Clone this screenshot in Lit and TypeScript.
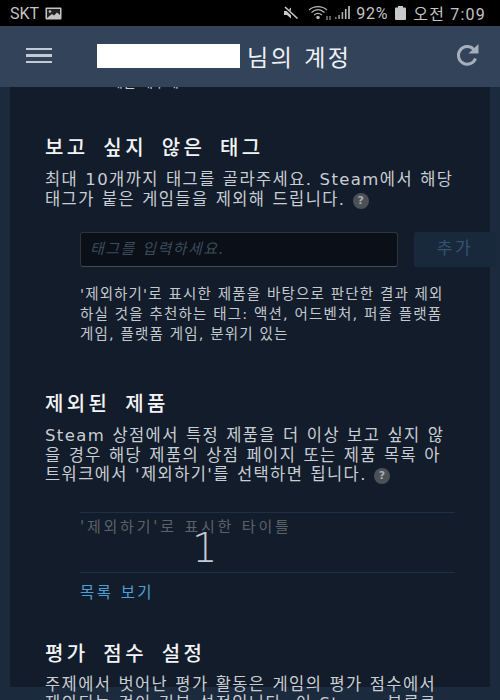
import { css, html, LitElement } from "lit";
import { customElement } from "lit/decorators.js";

@customElement("app-root")
export class AppRoot extends LitElement {
    renderHelp() {
        return html`<span class="help">?</span>`;
    }

    renderStatusBar() {
        return html`
        <div class="status">
            <div class="status-left">
                <span>SKT</span>
                <svg width="17" height="13" viewBox="0 0 17 13">
                    <rect x="0.5" y="0.5" width="16" height="12" rx="1" fill="#c4c4c4" />
                    <rect x="2" y="2" width="13" height="9" fill="#222" />
                    <circle cx="5" cy="4.5" r="1.3" fill="#c4c4c4" />
                    <path d="M2 11 L7 7 L9 8.5 L12 5.5 L15 8 V11 Z" fill="#c4c4c4" />
                </svg>
            </div>
            <div class="status-right">
                <svg width="16" height="14" viewBox="0 0 16 14">
                    <path d="M1 5 H4 L8 1.5 V12.5 L4 9 H1 Z" fill="#c8c8c8" />
                    <path d="M1.5 1 L14 13" stroke="#000" stroke-width="3" />
                    <path d="M2 1 L14.5 12.5" stroke="#c8c8c8" stroke-width="1.6" />
                </svg>
                <svg class="wifi" width="24" height="16" viewBox="0 0 24 16" fill="none" stroke="#b8b8b8" stroke-width="1.1">
                    <path d="M1 5 C6 0.5 14 0.5 19 5" />
                    <path d="M3.5 7.5 C7.5 4 12.5 4 16.5 7.5" />
                    <path d="M6 10 C8.5 8 11.5 8 14 10" />
                    <circle cx="10" cy="12.5" r="1.2" fill="#b8b8b8" />
                    <path d="M19 15 V11 M22 15 V11" stroke-width="1" />
                </svg>
                <svg width="15" height="14" viewBox="0 0 15 14">
                    <rect x="0" y="11" width="1.6" height="2" fill="#777" />
                    <rect x="3.3" y="9" width="1.6" height="4" fill="#999" />
                    <rect x="6.6" y="6" width="1.6" height="7" fill="#aaa" />
                    <rect x="9.9" y="3" width="1.6" height="10" fill="#bbb" />
                    <rect x="13.2" y="0" width="1.6" height="13" fill="#c8c8c8" />
                </svg>
                <span class="pct">92%</span>
                <svg class="battery" width="11" height="14" viewBox="0 0 11 14">
                    <rect x="3" y="0" width="5" height="2" fill="#c8c8c8" />
                    <rect x="0" y="1.5" width="11" height="12.5" rx="1" fill="#c8c8c8" />
                </svg>
                <span class="time">오전 7:09</span>
            </div>
        </div>`;
    }

    renderHeader() {
        return html`
        <header>
            <div class="burger"><i></i><i></i><i></i></div>
            <div class="name"></div>
            <div class="title">님의 계정</div>
            <svg class="refresh" width="25" height="25" viewBox="0 0 25 25" fill="none">
                <path d="M20.5 15.5 A8.8 8.8 0 1 1 18.6 6.3" stroke="#a6b0bc" stroke-width="3" />
                <path d="M13.5 10.5 L23.5 10.5 L23.5 1 Z" fill="#a6b0bc" />
            </svg>
        </header>`;
    }

    render() {
        return html`
        ${this.renderStatusBar()}
        ${this.renderHeader()}
        <main>
            <div class="panel">
                <div class="clipped">제한 해주세요</div>

                <h2 class="first">보고 싶지 않은 태그</h2>
                <p>최대 10개까지 태그를 골라주세요. Steam에서 해당<br />태그가 붙은 게임들을 제외해 드립니다. ${this.renderHelp()}</p>

                <div class="indent">
                    <div class="tag-row">
                        <div class="input">태그를 입력하세요.</div>
                        <div class="add">추가</div>
                    </div>
                    <div class="note">'제외하기'로 표시한 제품을 바탕으로 판단한 결과 제외<br />하실 것을 추천하는 태그: 액션, 어드벤처, 퍼즐 플랫폼<br />게임, 플랫폼 게임, 분위기 있는</div>
                </div>

                <h2 class="second">제외된 제품</h2>
                <p>Steam 상점에서 특정 제품을 더 이상 보고 싶지 않<br />을 경우 해당 제품의 상점 페이지 또는 제품 목록 아<br />트워크에서 '제외하기'를 선택하면 됩니다. ${this.renderHelp()}</p>

                <div class="indent">
                    <div class="count-box">
                        <div class="count-label">'제외하기'로 표시한 타이틀</div>
                        <div class="count">1</div>
                    </div>
                    <a class="link">목록 보기</a>
                </div>

                <h2 class="third">평가 점수 설정</h2>
                <p class="last">주제에서 벗어난 평가 활동은 게임의 평가 점수에서<br />제외되는 것이 기본 설정입니다. 이 Steam 분류로</p>
            </div>
        </main>`;
    }

    static styles = css`
        :host {
            display: block;
            width: 500px;
            height: 700px;
            overflow: hidden;
            background: #1b2a3d;
            font-family: "DejaVu Sans", "Noto Sans CJK KR", sans-serif;
        }

        .status {
            height: 26px;
            background: #000;
            color: #c4c4c4;
            display: flex;
            align-items: center;
            justify-content: space-between;
            padding: 0 14px 0 10px;
            font-family: "Roboto", "Noto Sans CJK KR", sans-serif;
            font-size: 16px;
        }

        .status-left,
        .status-right {
            display: flex;
            align-items: center;
            gap: 6px;
        }

        .status-right {
            gap: 3px;
        }

        .wifi {
            margin-left: 6px;
        }

        .pct {
            margin-left: 3px;
            letter-spacing: 0.8px;
        }

        .battery {
            margin: 0 4px;
        }

        .time {
            letter-spacing: 1.2px;
        }

        header {
            position: relative;
            z-index: 1;
            height: 61px;
            background: #33435a;
            display: flex;
            align-items: center;
            padding-left: 26px;
            color: #eef1f4;
        }

        .burger {
            width: 26px;
            display: flex;
            flex-direction: column;
            gap: 4px;
            margin-top: -2px;
        }

        .burger i {
            display: block;
            height: 2.5px;
            background: #c2cad6;
        }

        .name {
            width: 143px;
            height: 24px;
            background: #fff;
            margin-left: 45px;
            margin-top: -2px;
        }

        .title {
            margin-left: 7px;
            font-size: 23px;
            letter-spacing: 2.5px;
            margin-top: -2px;
        }

        .refresh {
            margin-left: auto;
            margin-right: 20px;
            margin-top: -2px;
        }

        main {
            padding: 0 10px;
        }

        .panel {
            height: 613px;
            background: #121c2a;
            padding: 0 35px;
        }

        .clipped {
            margin-top: -13px;
            height: 16px;
            padding-left: 65px;
            font-size: 14px;
            line-height: 16px;
            color: #c5ccd4;
        }

        h2 {
            margin: 0;
            font-size: 20px;
            font-weight: 500;
            line-height: 26px;
            letter-spacing: 3.4px;
            word-spacing: 5px;
            color: #f2f4f6;
        }

        h2.first {
            margin-top: 45px;
        }

        h2.second {
            margin-top: 47px;
        }

        h2.third {
            margin-top: 38px;
        }

        p {
            margin: 9px 0 0;
            font-size: 16.5px;
            line-height: 19.5px;
            letter-spacing: 1.4px;
            word-spacing: 0.5px;
            color: #c9ced4;
        }

        p.last {
            margin-top: 8px;
        }

        .help {
            display: inline-block;
            width: 16px;
            height: 16px;
            margin-left: 0;
            border-radius: 50%;
            background: #4c5157;
            color: #a9adb2;
            font-size: 11px;
            font-weight: 700;
            line-height: 16px;
            letter-spacing: 0;
            text-align: center;
            vertical-align: 1px;
        }

        .indent {
            margin-left: 35px;
        }

        .tag-row {
            display: flex;
            margin-top: 23px;
            gap: 16px;
            width: 416px;
        }

        .input {
            box-sizing: border-box;
            width: 318px;
            height: 35px;
            background: #0a0f18;
            border: 1px solid #2c3440;
            border-bottom-color: #454c57;
            border-radius: 3px;
            padding-left: 9px;
            font-size: 15px;
            font-style: italic;
            line-height: 32px;
            letter-spacing: 1.5px;
            color: #3c4c5c;
        }

        .add {
            flex: none;
            width: 82px;
            height: 35px;
            border-radius: 2px;
            background: #18293c;
            color: #36536f;
            font-size: 17px;
            line-height: 33px;
            letter-spacing: 2.5px;
            text-align: center;
        }

        .note {
            margin-top: 17px;
            font-size: 14.5px;
            line-height: 20px;
            letter-spacing: 1.15px;
            color: #c4c9cf;
        }

        .count-box {
            position: relative;
            box-sizing: border-box;
            width: 375px;
            height: 61px;
            margin-top: 27px;
            border-top: 1px solid #1c3146;
            border-bottom: 1px solid #1c3146;
            padding-top: 5px;
        }

        .count-label {
            font-size: 15px;
            line-height: 19px;
            letter-spacing: 2.8px;
            color: #5a6269;
        }

        .count {
            position: absolute;
            left: 112px;
            top: 10px;
            font-size: 40px;
            font-weight: 300;
            line-height: 50px;
            color: #c3cbd6;
        }

        .link {
            display: block;
            margin-top: 10px;
            font-size: 15.5px;
            line-height: 20px;
            letter-spacing: 2.4px;
            color: #4f9fd6;
        }
    `;
}
